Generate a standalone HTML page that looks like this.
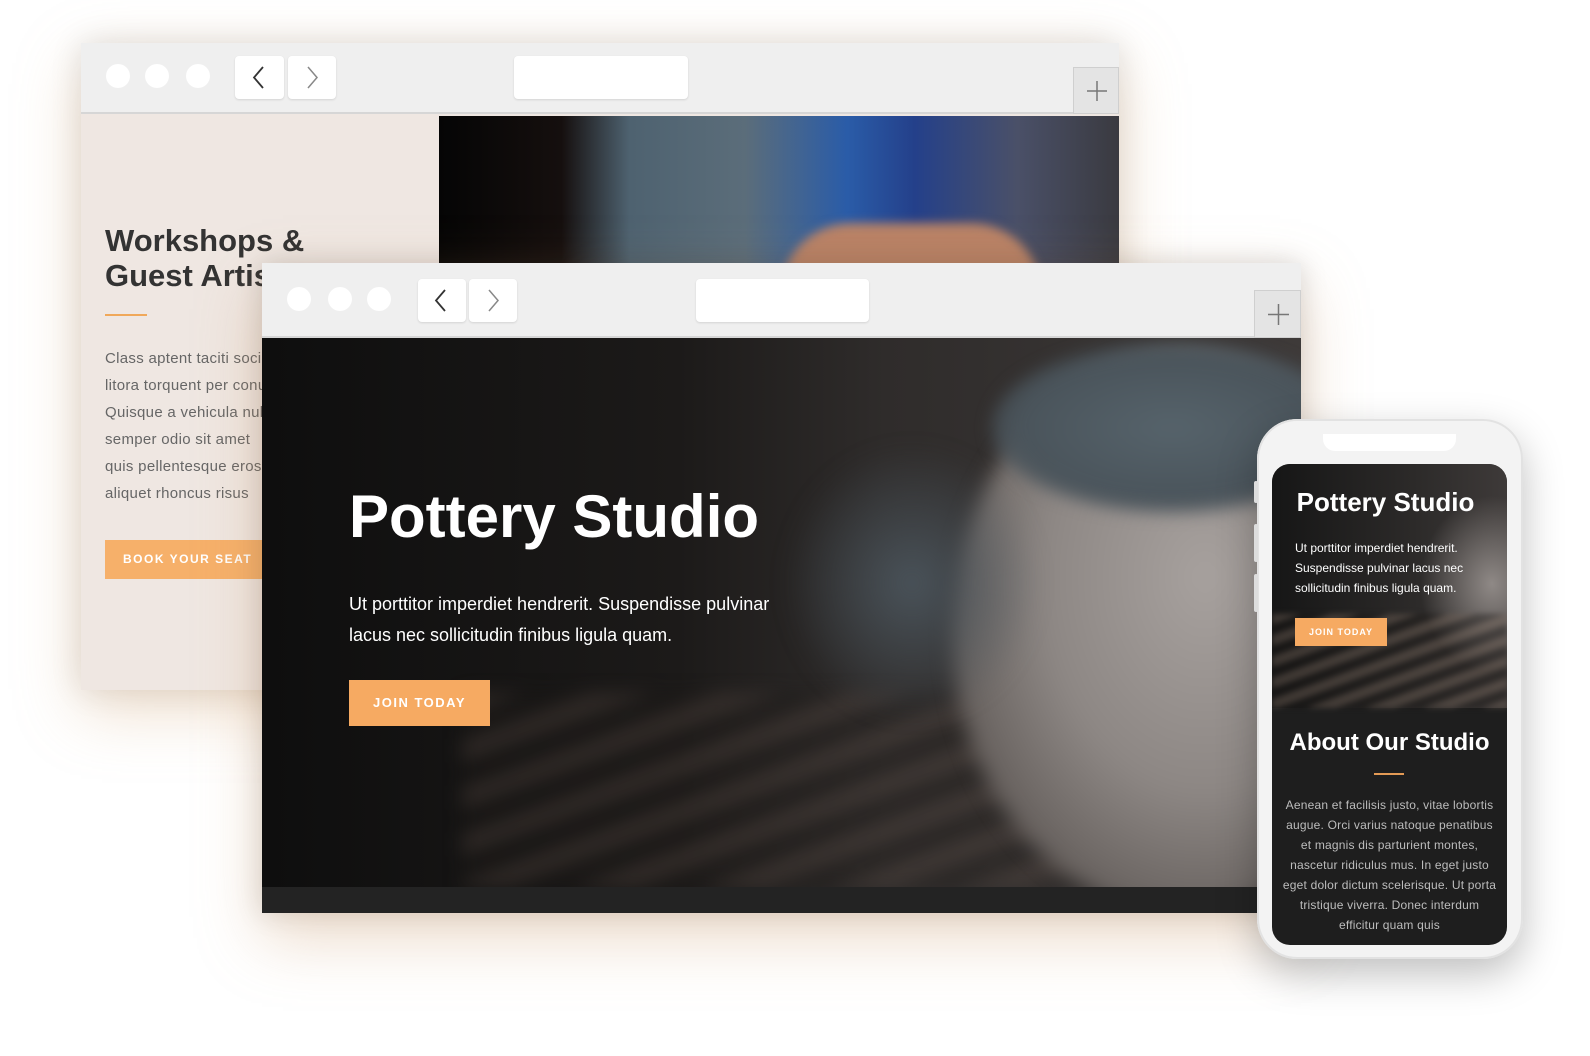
<!DOCTYPE html>
<html><head><meta charset="utf-8"><style>
*{margin:0;padding:0;box-sizing:border-box}
body{width:1590px;height:1056px;background:#fff;position:relative;overflow:hidden;font-family:"Liberation Sans",sans-serif}
.abs{position:absolute}
.bar{background:#efefef;border-bottom:2px solid #d6d6d6}
.dot{position:absolute;width:24px;height:24px;border-radius:50%;background:#fff}
.btn{position:absolute;background:#fff;border-radius:4px;box-shadow:0 1px 2px rgba(0,0,0,.12)}
.plus{position:absolute;background:#e4e4e4;border:1px solid #cfcfcf}
</style></head><body>

<!-- back browser -->
<div class="abs" style="left:81px;top:43px;width:1038px;height:647px;box-shadow:0 20px 60px rgba(210,160,110,.35),0 0 30px rgba(0,0,0,.12);background:#efe7e2">
  <div class="bar abs" style="left:0;top:0;width:1038px;height:71px"></div>
  <div class="dot" style="left:25px;top:21px"></div>
  <div class="dot" style="left:64px;top:21px"></div>
  <div class="dot" style="left:105px;top:21px"></div>
  <div class="btn" style="left:154px;top:13px;width:49px;height:43px"><svg width="49" height="43"><path d="M28 11 L19 21.5 L28 32" stroke="#333" stroke-width="1.8" fill="none"/></svg></div>
  <div class="btn" style="left:207px;top:13px;width:48px;height:43px"><svg width="48" height="43"><path d="M20 11 L29 21.5 L20 32" stroke="#888" stroke-width="1.5" fill="none"/></svg></div>
  <div class="btn" style="left:433px;top:13px;width:174px;height:43px"></div>
  <div class="plus" style="left:992px;top:24px;width:46px;height:47px"><svg width="46" height="47"><path d="M23 13v20M13 23h20" stroke="#777" stroke-width="1.5"/></svg></div>
  <div class="abs" style="left:358px;top:73px;width:680px;height:150px;background:linear-gradient(90deg,#050505 0%,#150f0e 18%,#4e6270 28%,#5b6d7a 45%,#2a5ca8 60%,#24408a 70%,#4a5068 85%,#3a3a40 100%)"></div>
  <div class="abs" style="left:700px;top:180px;width:260px;height:70px;border-radius:80px 80px 0 0;background:#b98266;filter:blur(5px)"></div>
  <div class="abs" style="left:24px;top:180px;font:700 31px/35px 'Liberation Sans',sans-serif;color:#333">Workshops &amp;<br>Guest Artists</div>
  <div class="abs" style="left:24px;top:271px;width:42px;height:2px;background:#f0a85a"></div>
  <div class="abs" style="left:24px;top:302px;font:15px/27px 'Liberation Sans',sans-serif;color:#666;width:300px;letter-spacing:.3px">Class aptent taciti sociosqu<br>litora torquent per conubia<br>Quisque a vehicula nulla<br>semper odio sit amet<br>quis pellentesque eros<br>aliquet rhoncus risus</div>
  <div class="abs" style="left:24px;top:497px;width:170px;height:39px;background:#f6b06a;color:#fff;font:700 12px/39px 'Liberation Sans',sans-serif;letter-spacing:1.5px;padding-left:18px">BOOK YOUR SEAT</div>
</div>

<!-- front browser -->
<div class="abs" style="left:262px;top:263px;width:1039px;height:650px;box-shadow:0 25px 60px rgba(200,150,100,.35),0 0 25px rgba(0,0,0,.15);background:#1a1a1a;overflow:hidden">
  <div class="abs" style="left:0;top:75px;width:1039px;height:549px;background:linear-gradient(90deg,#0e0e0e 0%,#1c1a19 40%,#2f2c2b 60%,#3e3a39 100%)"></div>
  <div class="abs" style="left:200px;top:430px;width:900px;height:194px;background:repeating-linear-gradient(160deg,rgba(90,75,68,.35) 0 22px,rgba(25,22,20,.3) 22px 44px);filter:blur(9px)"></div>
  <div class="abs" style="left:690px;top:90px;width:460px;height:560px;border-radius:50%;background:radial-gradient(ellipse at 55% 40%,#a7a19e 0%,#8d8784 45%,#6b6562 70%,rgba(60,56,54,0) 100%);filter:blur(10px)"></div>
  <div class="abs" style="left:730px;top:80px;width:360px;height:170px;border-radius:50%;background:radial-gradient(ellipse,#56636b 0%,#4a545b 60%,rgba(70,75,80,0) 100%);filter:blur(8px)"></div>
  <div class="abs" style="left:520px;top:180px;width:260px;height:280px;border-radius:50%;background:radial-gradient(ellipse,#4a535a 0%,rgba(40,40,40,0) 70%);filter:blur(10px)"></div>
  <div class="bar abs" style="left:0;top:0;width:1039px;height:75px"></div>
  <div class="dot" style="left:25px;top:24px"></div>
  <div class="dot" style="left:66px;top:24px"></div>
  <div class="dot" style="left:105px;top:24px"></div>
  <div class="btn" style="left:156px;top:16px;width:48px;height:43px"><svg width="48" height="43"><path d="M27 11 L18 21.5 L27 32" stroke="#333" stroke-width="1.8" fill="none"/></svg></div>
  <div class="btn" style="left:207px;top:16px;width:48px;height:43px"><svg width="48" height="43"><path d="M20 11 L29 21.5 L20 32" stroke="#888" stroke-width="1.5" fill="none"/></svg></div>
  <div class="btn" style="left:434px;top:16px;width:173px;height:43px"></div>
  <div class="plus" style="left:992px;top:27px;width:47px;height:48px"><svg width="47" height="48"><path d="M23.5 13v21M13 23.5h21" stroke="#777" stroke-width="1.5"/></svg></div>
  <div class="abs" style="left:87px;top:214px;font:700 60px/80px 'Liberation Sans',sans-serif;color:#fff">Pottery Studio</div>
  <div class="abs" style="left:87px;top:326px;font:18px/31px 'Liberation Sans',sans-serif;color:#fff;width:460px">Ut porttitor imperdiet hendrerit. Suspendisse pulvinar lacus nec sollicitudin finibus ligula quam.</div>
  <div class="abs" style="left:87px;top:417px;width:141px;height:46px;background:#f6aa62;color:#fff;font:700 13px/46px 'Liberation Sans',sans-serif;letter-spacing:1.5px;text-align:center">JOIN TODAY</div>
  <div class="abs" style="left:0;top:624px;width:1039px;height:26px;background:#232323"></div>
</div>

<!-- phone -->
<div class="abs" style="left:1257px;top:419px;width:266px;height:540px;border-radius:40px;background:#f3f3f3;box-shadow:0 15px 40px rgba(0,0,0,.25),inset 0 0 0 2px #e2e2e2">
  <div class="abs" style="left:-3px;top:62px;width:4px;height:22px;background:#ddd;border-radius:2px"></div>
  <div class="abs" style="left:-3px;top:105px;width:4px;height:38px;background:#ddd;border-radius:2px"></div>
  <div class="abs" style="left:-3px;top:155px;width:4px;height:38px;background:#ddd;border-radius:2px"></div>
  <div class="abs" style="left:66px;top:15px;width:133px;height:17px;background:#fff;border-radius:0 0 12px 12px"></div>
  <div class="abs" style="left:15px;top:45px;width:235px;height:481px;border-radius:18px;background:#1e1e1e;overflow:hidden">
    <div class="abs" style="left:0;top:0;width:235px;height:244px;background:radial-gradient(ellipse 90px 110px at 220px 120px,#8f8986 0%,rgba(60,55,55,0) 80%),linear-gradient(90deg,#161616,#2c2a29 60%,#3e3a39)"></div>
    <div class="abs" style="left:0;top:150px;width:235px;height:94px;background:repeating-linear-gradient(160deg,rgba(110,95,85,.45) 0 10px,rgba(25,22,20,.4) 10px 20px);filter:blur(3px)"></div>
    <div class="abs" style="left:0;top:22px;width:235px;text-align:center;font:700 26px/32px 'Liberation Sans',sans-serif;color:#fff;padding-right:8px">Pottery Studio</div>
    <div class="abs" style="left:23px;top:74px;width:185px;font:12px/20px 'Liberation Sans',sans-serif;color:#fff">Ut porttitor imperdiet hendrerit. Suspendisse pulvinar lacus nec sollicitudin finibus ligula quam.</div>
    <div class="abs" style="left:23px;top:154px;width:92px;height:28px;background:#f6aa62;color:#fff;font:700 9px/28px 'Liberation Sans',sans-serif;letter-spacing:1px;text-align:center">JOIN TODAY</div>
    <div class="abs" style="left:0;top:264px;width:235px;text-align:center;font:700 24px/30px 'Liberation Sans',sans-serif;color:#fff">About Our Studio</div>
    <div class="abs" style="left:102px;top:309px;width:30px;height:2px;background:#e39a55"></div>
    <div class="abs" style="left:10px;top:331px;width:215px;text-align:center;font:12px/20px 'Liberation Sans',sans-serif;color:#bdbdbd;letter-spacing:.2px">Aenean et facilisis justo, vitae lobortis augue. Orci varius natoque penatibus et magnis dis parturient montes, nascetur ridiculus mus. In eget justo eget dolor dictum scelerisque. Ut porta tristique viverra. Donec interdum efficitur quam quis</div>
  </div>
</div>
</body></html>
